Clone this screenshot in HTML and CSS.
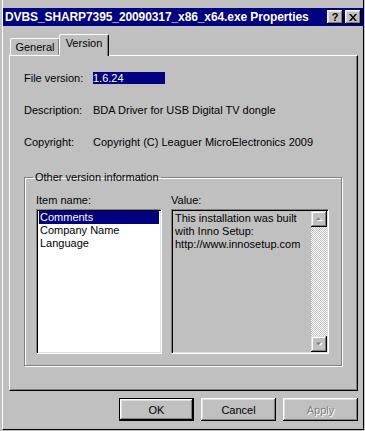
FILE: index.html
```html
<!DOCTYPE html>
<html lang="en">
<head>
  <meta charset="UTF-8" />
  <title>Properties</title>
  <link rel="stylesheet" href="styles.css">
</head>
<body>
  <div class="window">
    <div class="titlebar">
      <span class="title">DVBS_SHARP7395_20090317_x86_x64.exe Properties</span>
      <div class="caption-buttons">
        <button class="cap-btn help">?</button>
        <button class="cap-btn close">
          <svg width="8" height="7" viewBox="0 0 8 7">
            <path d="M0 0h2l2 2.5L6 0h2L5 3.5L8 7H6L4 4.5L2 7H0l3-3.5z" fill="#000"/>
          </svg>
        </button>
      </div>
    </div>

    <div class="tabs">
      <div class="tab">General</div>
      <div class="tab active">Version</div>
    </div>

    <div class="panel">
      <div class="props">
        <span class="prop-label">File version:</span>
        <span class="prop-value"><span class="selected">1.6.24</span></span>
        <span class="prop-label">Description:</span>
        <span class="prop-value">BDA Driver for USB Digital TV dongle</span>
        <span class="prop-label">Copyright:</span>
        <span class="prop-value">Copyright (C) Leaguer MicroElectronics 2009</span>
      </div>

      <fieldset class="group">
        <legend>Other version information</legend>
        <div class="group-cols">
          <div class="col col-items">
            <div class="col-label">Item name:</div>
            <ul class="listbox">
              <li class="selected-item">Comments</li>
              <li>Company Name</li>
              <li>Language</li>
            </ul>
          </div>
          <div class="col col-value">
            <div class="col-label">Value:</div>
            <div class="valuebox">
              <div class="value-text">This installation was built with Inno Setup: http://www.innosetup.com</div>
              <div class="scrollbar">
                <div class="scroll-btn">
                  <svg width="7" height="5" viewBox="0 0 7 5">
                    <path d="M1 4h6L4 1z" fill="#fff"/>
                    <path d="M0 3h5L2.5 0.5z" fill="#808080"/>
                  </svg>
                </div>
                <div class="scroll-track"></div>
                <div class="scroll-btn">
                  <svg width="7" height="5" viewBox="0 0 7 5">
                    <path d="M1 1h6L4 4z" fill="#fff"/>
                    <path d="M0 0.5h5L2.5 3.5z" fill="#808080"/>
                  </svg>
                </div>
              </div>
            </div>
          </div>
        </div>
      </fieldset>
    </div>

    <div class="dialog-buttons">
      <button class="btn default">OK</button>
      <button class="btn">Cancel</button>
      <button class="btn disabled">Apply</button>
    </div>
  </div>
</body>
</html>
```

FILE: styles.css
```css
body {
  margin: 0;
  background-color: #c0c0c0;
  font-family: 'Liberation Sans', Arial, sans-serif;
  font-size: 11px;
  color: #000;
}

.window {
  box-sizing: border-box;
  width: 362px;
  height: 430px;
  margin-left: 2px;
  padding: 8px 0 0;
  border-left: 1px solid #fff;
  border-right: 1px solid #000;
  border-bottom: 1px solid #000;
  display: flex;
  flex-direction: column;
}

/* title bar */
.titlebar {
  height: 18px;
  background-color: #000080;
  display: flex;
  align-items: center;
  justify-content: space-between;
  padding: 0 2px 0 2px;
}

.title {
  color: #fff;
  font-weight: bold;
  font-size: 12px;
  letter-spacing: -0.1px;
  white-space: nowrap;
}

.caption-buttons {
  display: flex;
  gap: 2px;
}

.cap-btn {
  width: 16px;
  height: 14px;
  padding: 0;
  border: none;
  background-color: #c0c0c0;
  box-shadow: inset -1px -1px #000, inset 1px 1px #fff, inset -2px -2px #808080, inset 2px 2px #dfdfdf;
  display: flex;
  align-items: center;
  justify-content: center;
  font-family: 'Liberation Sans', Arial, sans-serif;
  font-weight: bold;
  font-size: 11px;
  line-height: 1;
  color: #000;
}

/* tabs */
.tabs {
  display: flex;
  align-items: flex-end;
  height: 21px;
  margin-top: 8px;
  padding-left: 7px;
}

.tab {
  box-sizing: border-box;
  width: 50px;
  height: 17px;
  text-align: center;
  line-height: 16px;
  border-top: 1px solid #fff;
  border-left: 1px solid #fff;
  border-right: 1px solid #000;
  border-radius: 2px 2px 0 0;
  box-shadow: inset -1px 0 #808080;
}

.tab.active {
  position: relative;
  z-index: 1;
  width: 50px;
  height: 22px;
  margin-left: -1px;
  margin-bottom: -1px;
  line-height: 17px;
  background-color: #c0c0c0;
}

/* panel */
.panel {
  box-sizing: border-box;
  height: 336px;
  margin: 0 5px 0 6px;
  border: 1px solid;
  border-color: #fff #000 #000 #fff;
  box-shadow: inset -1px -1px #808080;
  padding: 16px 0 0 14px;
}

.props {
  display: grid;
  grid-template-columns: 69px auto;
  row-gap: 19px;
  line-height: 13px;
}

.selected {
  display: inline-block;
  width: 72px;
  height: 12px;
  line-height: 12px;
  background-color: #000080;
  color: #fff;
}

.group {
  box-sizing: border-box;
  width: 318px;
  margin: 22px 0 0;
  padding: 10px 0 11px 11px;
  border: 1px solid #808080;
  box-shadow: 1px 1px #fff, inset 1px 1px #fff;
}

.group legend {
  padding: 0 2px;
  margin-left: -3px;
  line-height: 13px;
}

.group-cols {
  display: flex;
  gap: 9px;
}

.col-label {
  line-height: 13px;
  margin-bottom: 2px;
}

.listbox,
.valuebox {
  box-sizing: border-box;
  height: 145px;
  margin: 0;
  border: 1px solid;
  border-color: #808080 #fff #fff #808080;
  box-shadow: inset 1px 1px #000, inset -1px -1px #dfdfdf;
}

.listbox {
  width: 126px;
  list-style: none;
  padding: 1px 2px;
  background-color: #fff;
}

.listbox li {
  height: 13px;
  line-height: 13px;
  padding-left: 1px;
}

.selected-item {
  background-color: #000080;
  color: #fff;
}

.valuebox {
  width: 158px;
  padding: 1px;
  background-color: #c0c0c0;
  display: flex;
}

.value-text {
  flex: 1;
  padding: 1px 2px;
  line-height: 13px;
}

.scrollbar {
  width: 16px;
  display: flex;
  flex-direction: column;
}

.scroll-btn {
  box-sizing: border-box;
  height: 16px;
  background-color: #c0c0c0;
  box-shadow: inset -1px -1px #000, inset 1px 1px #dfdfdf, inset -2px -2px #808080, inset 2px 2px #fff;
  display: flex;
  align-items: center;
  justify-content: center;
}

.scroll-track {
  flex: 1;
  background-image: repeating-conic-gradient(#fff 0 25%, #c0c0c0 0 50%);
  background-size: 2px 2px;
}

/* bottom buttons */
.dialog-buttons {
  display: flex;
  justify-content: flex-end;
  gap: 7px;
  margin-top: 7px;
  padding-right: 5px;
}

.btn {
  box-sizing: border-box;
  width: 75px;
  height: 23px;
  padding: 0;
  border: none;
  background-color: #c0c0c0;
  box-shadow: inset -1px -1px #000, inset 1px 1px #fff, inset -2px -2px #808080, inset 2px 2px #dfdfdf;
  font-family: 'Liberation Sans', Arial, sans-serif;
  font-size: 11px;
  color: #000;
}

.btn.default {
  border: 1px solid #000;
}

.btn.disabled {
  color: #808080;
  text-shadow: 1px 1px #fff;
}
```
